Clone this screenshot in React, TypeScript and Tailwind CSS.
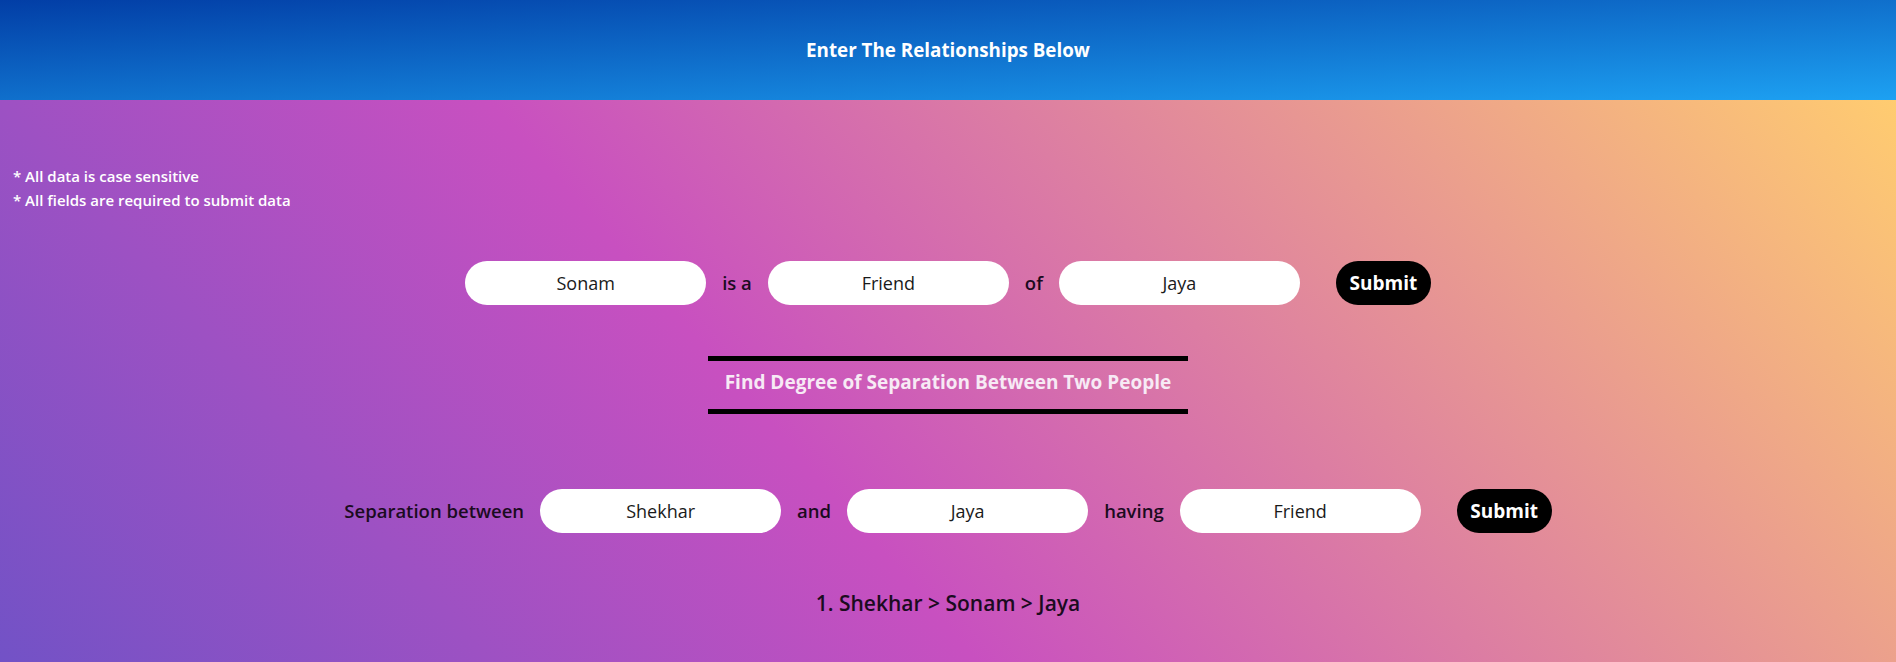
import React from 'react'

const font = { fontFamily: '"Open Sans", "Noto Sans", sans-serif' }

const Field = ({ value }: { value: string }) => (
  <input
    defaultValue={value}
    className='h-[44px] w-[241px] rounded-full bg-white text-center text-[18px] text-[#1a1a1a] outline-none'
  />
)

const Label = ({ children }: { children: React.ReactNode }) => (
  <span className='text-[18.5px] font-semibold text-[#1b0b1f]'>{children}</span>
)

const SubmitButton = () => (
  <button className='ml-5 h-[44px] w-[95px] rounded-full bg-black text-[19px] font-bold text-white'>
    Submit
  </button>
)

const App = () => {
  return (
    <div style={font} className='flex min-h-screen w-full flex-col'>
      <header className='flex h-[100px] items-center justify-center bg-[linear-gradient(to_bottom_right,#023ea6,#1da1f2)]'>
        <h1 className='text-[18.8px] font-bold text-white'>Enter The Relationships Below</h1>
      </header>

      <main className='flex-1 bg-[linear-gradient(49deg,#7252c6_0%,#c850c0_41%,#ffcc70_100%)]'>
        <div className='pl-[13px] pt-[64px] text-[15px] font-semibold leading-[24px] text-white'>
          <p>* All data is case sensitive</p>
          <p>* All fields are required to submit data</p>
        </div>

        <section className='mt-[49px] flex items-center justify-center gap-4'>
          <Field value='Sonam' />
          <Label>is a</Label>
          <Field value='Friend' />
          <Label>of</Label>
          <Field value='Jaya' />
          <SubmitButton />
        </section>

        <div className='mt-[51px] flex justify-center'>
          <div className='flex h-[58px] w-[480px] items-center justify-center border-y-[5px] border-black pb-[5px]'>
            <h2 className='text-[19px] font-bold text-[#f7eaf5]'>Find Degree of Separation Between Two People</h2>
          </div>
        </div>

        <section className='mt-[75px] flex items-center justify-center gap-4'>
          <Label>Separation between</Label>
          <Field value='Shekhar' />
          <Label>and</Label>
          <Field value='Jaya' />
          <Label>having</Label>
          <Field value='Friend' />
          <SubmitButton />
        </section>

        <div className='mt-[56px] text-center text-[21px] font-semibold leading-[28px] text-[#1b0b1f]'>
          1. Shekhar &gt; Sonam &gt; Jaya
        </div>
      </main>
    </div>
  )
}

export default App
